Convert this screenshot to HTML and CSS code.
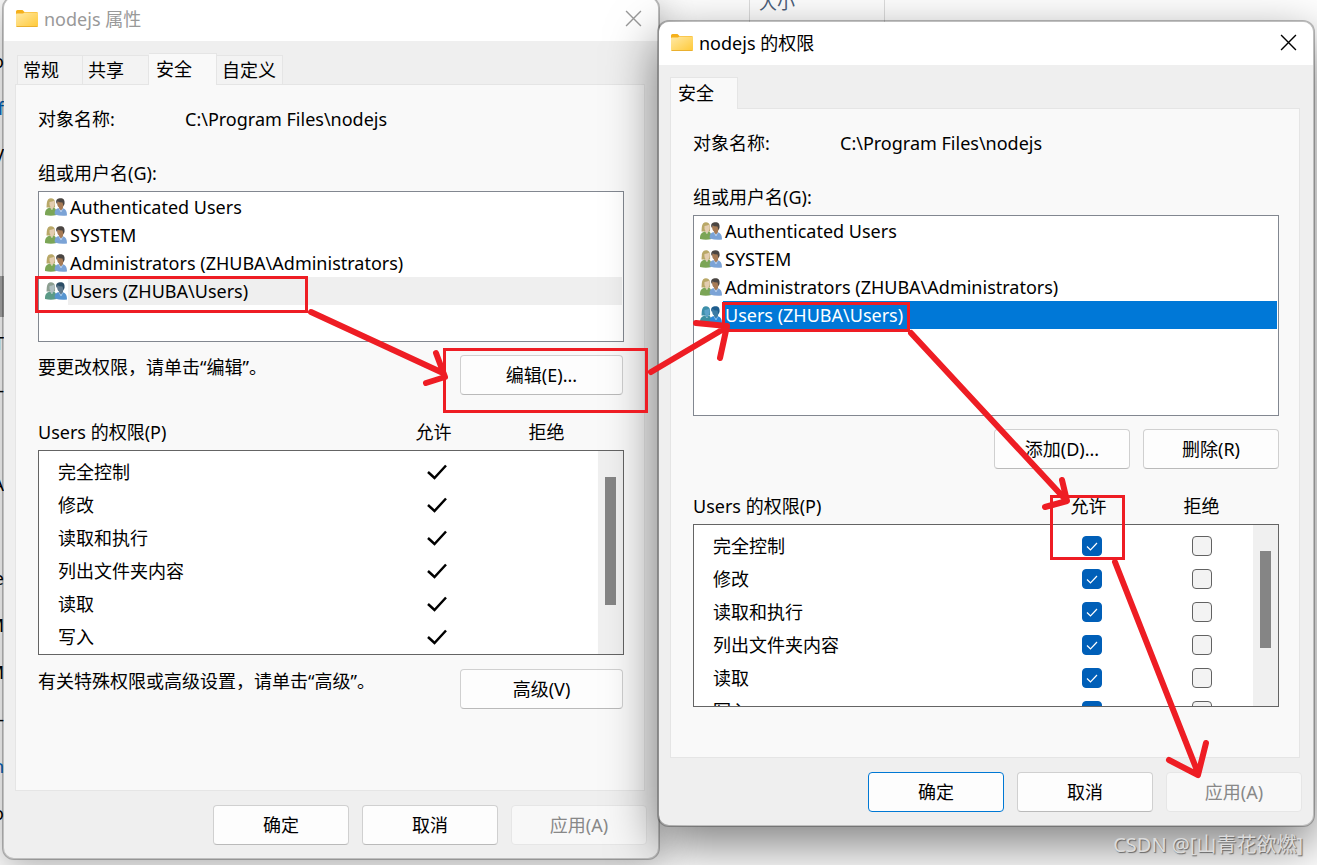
FILE: index.html
```html
<!DOCTYPE html>
<html lang="zh-CN">
<head>
  <meta charset="UTF-8" />
  <meta name="viewport" content="width=device-width, initial-scale=1.0"/>
  <title>nodejs 的权限</title>
  <link rel="stylesheet" href="styles.css">
</head>
<body>
  <!-- Shared icons -->
  <svg class="sprite" aria-hidden="true">
    <defs>
      <linearGradient id="folderFill" x1="0" y1="0" x2="1" y2="1">
        <stop offset="0" stop-color="#ffe9a6"/>
        <stop offset="1" stop-color="#ffc937"/>
      </linearGradient>
    </defs>
    <symbol id="folder" viewBox="0 0 22 17">
      <path d="M0 1.5Q0 0 1.5 0H6.500L8.500 2H20.500Q22 2 22 3.500V9H0Z" fill="#f5b01a"/>
      <path d="M0 4.500Q0 3.500 1 3.500H7L8.500 2.500H21Q22 2.500 22 3.500V15.500Q22 17 20.500 17H1.500Q0 17 0 15.500Z" fill="url(#folderFill)"/>
      <path d="M.5 16.500H21.500" stroke="#eab02f"/>
    </symbol>
    <symbol id="users" viewBox="0 0 22 18">
      <path class="hair-a" d="M1.500 9.500C2 6 1 .5 6 .2C10 .2 10.500 4 10 9.500Z"/>
      <path class="face-a" d="M4.500 4Q7 3.500 9.500 2.500Q10.500 8 8 9.500V11H5.500V9Q4 7 4.500 4Z"/>
      <path class="body-a" d="M0 17C0 12.500 1 10.500 5 9.500L7 12L8.500 9.500C10.500 10 11.500 12 11.500 17Q6 18.500 0 17Z"/>
      <path class="face-b" d="M12 3.500Q12 8.500 14 9.500V12H18V9Q19.500 7 19 3.500Z"/>
      <path class="hair-b" d="M11.200 4.500C10.800 1.500 13 .3 15.500 .3C18.500 .3 20 2 19.500 6L18.500 8L17.500 4.500Q14 4.500 12.500 3.500L12 6Z"/>
      <path class="body-b" d="M9.800 16.500C9.300 12.500 10.500 11 13.500 10L16 12.500L18 10.300C21 11.500 22 13.500 22 17.500Q16 18.500 9.800 16.500Z"/>
      <path d="M14 10.300L16 14L17.800 10.500" fill="none" stroke="#fff" stroke-opacity=".5" stroke-width=".8"/>
    </symbol>
    <symbol id="close" viewBox="0 0 16 16">
      <path d="M1 1L15 15M15 1L1 15" fill="none" stroke="currentColor" stroke-width="1.300"/>
    </symbol>
    <symbol id="tick" viewBox="0 0 20 16">
      <path d="M1 8L7.500 14L19 1.500" fill="none" stroke="#000" stroke-width="2.500"/>
    </symbol>
  </svg>

  <div class="desktop">
    <!-- Explorer behind the dialogs -->
    <div class="explorer-names" aria-hidden="true">
      <span>o</span><span class="blue">f</span><span>V</span><span></span><span></span><span class="thumb"></span>
      <span>T</span><span>-</span><span></span><span>A</span><span></span><span>e</span><span>M</span><span>M</span>
      <span>-</span><span class="blue">h</span><span>o</span>
    </div>
    <div class="explorer-column" aria-hidden="true">大小</div>

    <!-- Properties dialog -->
    <section class="window inactive">
      <header class="titlebar">
        <svg class="folder"><use href="#folder"/></svg>
        <h1>nodejs 属性</h1>
        <button class="close" type="button" aria-label="关闭"><svg><use href="#close"/></svg></button>
      </header>
      <div class="window-body">
        <div class="tabs several" role="tablist">
          <button class="tab" type="button" role="tab">常规</button>
          <button class="tab" type="button" role="tab">共享</button>
          <button class="tab active" type="button" role="tab" aria-selected="true">安全</button>
          <button class="tab" type="button" role="tab">自定义</button>
        </div>
        <div class="panel">
          <div class="object">
            <span>对象名称:</span>
            <span>C:\Program Files\nodejs</span>
          </div>
          <div class="label" id="groupsA">组或用户名(G):</div>
          <ul class="user-list" role="listbox" aria-labelledby="groupsA">
            <li role="option"><svg><use href="#users"/></svg><span>Authenticated Users</span></li>
            <li role="option"><svg><use href="#users"/></svg><span>SYSTEM</span></li>
            <li role="option"><svg><use href="#users"/></svg><span>Administrators (ZHUBA\Administrators)</span></li>
            <li class="selected" role="option" aria-selected="true"><svg><use href="#users"/></svg><span>Users (ZHUBA\Users)</span></li>
          </ul>
          <div class="action-row">
            <p>要更改权限，请单击“编辑”。</p>
            <button class="btn wide" type="button">编辑(E)...</button>
          </div>
          <div class="permissions">
            <table>
              <thead>
                <tr><th>Users 的权限(P)</th><th>允许</th><th>拒绝</th></tr>
              </thead>
              <tbody>
                <tr><td>完全控制</td><td><svg class="tick"><use href="#tick"/></svg></td><td></td></tr>
                <tr><td>修改</td><td><svg class="tick"><use href="#tick"/></svg></td><td></td></tr>
                <tr><td>读取和执行</td><td><svg class="tick"><use href="#tick"/></svg></td><td></td></tr>
                <tr><td>列出文件夹内容</td><td><svg class="tick"><use href="#tick"/></svg></td><td></td></tr>
                <tr><td>读取</td><td><svg class="tick"><use href="#tick"/></svg></td><td></td></tr>
                <tr><td>写入</td><td><svg class="tick"><use href="#tick"/></svg></td><td></td></tr>
              </tbody>
            </table>
            <div class="scrollbar"><div class="scroll-thumb"></div></div>
          </div>
          <div class="action-row advanced">
            <p>有关特殊权限或高级设置，请单击“高级”。</p>
            <button class="btn wide" type="button">高级(V)</button>
          </div>
        </div>
        <div class="dialog-buttons">
          <button class="btn" type="button">确定</button>
          <button class="btn" type="button">取消</button>
          <button class="btn" type="button" disabled>应用(A)</button>
        </div>
      </div>
    </section>

    <!-- Permissions dialog -->
    <section class="window front">
      <header class="titlebar">
        <svg class="folder"><use href="#folder"/></svg>
        <h1>nodejs 的权限</h1>
        <button class="close" type="button" aria-label="关闭"><svg><use href="#close"/></svg></button>
      </header>
      <div class="window-body">
        <div class="tabs" role="tablist">
          <button class="tab active" type="button" role="tab" aria-selected="true">安全</button>
        </div>
        <div class="panel">
          <div class="object">
            <span>对象名称:</span>
            <span>C:\Program Files\nodejs</span>
          </div>
          <div class="label" id="groupsB">组或用户名(G):</div>
          <ul class="user-list" role="listbox" aria-labelledby="groupsB">
            <li role="option"><svg><use href="#users"/></svg><span>Authenticated Users</span></li>
            <li role="option"><svg><use href="#users"/></svg><span>SYSTEM</span></li>
            <li role="option"><svg><use href="#users"/></svg><span>Administrators (ZHUBA\Administrators)</span></li>
            <li class="selected" role="option" aria-selected="true"><svg><use href="#users"/></svg><span>Users (ZHUBA\Users)</span></li>
          </ul>
          <div class="list-buttons">
            <button class="btn" type="button">添加(D)...</button>
            <button class="btn" type="button">删除(R)</button>
          </div>
          <div class="permissions">
            <table>
              <thead>
                <tr><th>Users 的权限(P)</th><th>允许</th><th>拒绝</th></tr>
              </thead>
              <tbody>
                <tr><td>完全控制</td><td><input type="checkbox" aria-label="允许完全控制" checked></td><td><input type="checkbox" aria-label="拒绝完全控制"></td></tr>
                <tr><td>修改</td><td><input type="checkbox" aria-label="允许修改" checked></td><td><input type="checkbox" aria-label="拒绝修改"></td></tr>
                <tr><td>读取和执行</td><td><input type="checkbox" aria-label="允许读取和执行" checked></td><td><input type="checkbox" aria-label="拒绝读取和执行"></td></tr>
                <tr><td>列出文件夹内容</td><td><input type="checkbox" aria-label="允许列出文件夹内容" checked></td><td><input type="checkbox" aria-label="拒绝列出文件夹内容"></td></tr>
                <tr><td>读取</td><td><input type="checkbox" aria-label="允许读取" checked></td><td><input type="checkbox" aria-label="拒绝读取"></td></tr>
                <tr><td>写入</td><td><input type="checkbox" aria-label="允许写入" checked></td><td><input type="checkbox" aria-label="拒绝写入"></td></tr>
              </tbody>
            </table>
            <div class="scrollbar"><div class="scroll-thumb"></div></div>
          </div>
        </div>
        <div class="dialog-buttons">
          <button class="btn default" type="button">确定</button>
          <button class="btn" type="button">取消</button>
          <button class="btn" type="button" disabled>应用(A)</button>
        </div>
      </div>
    </section>

    <!-- Red step marks -->
    <svg class="marks" viewBox="0 0 1317 865" preserveAspectRatio="none" aria-hidden="true">
      <g class="boxes">
        <rect x="36.500" y="277.500" width="270" height="34"/>
        <rect x="444.500" y="349.500" width="202" height="62"/>
        <rect x="723.500" y="303.500" width="185" height="27"/>
        <rect x="1051.500" y="496.500" width="72" height="62"/>
      </g>
      <g class="arrows">
        <path d="M311 312L443 373M436 353L445 377L426 383"/>
        <path d="M651 372L727 327M696 323L727 326L720 358"/>
        <path d="M911 333L1065 499M1062 480L1067 501L1045 507"/>
        <path d="M1115 562L1198 773M1169 760L1198 775L1206 743"/>
      </g>
    </svg>

    <div class="watermark">CSDN @[山青花欲燃]</div>
  </div>
</body>
</html>
```

FILE: styles.css
```css
*, *::before, *::after {
  box-sizing: border-box;
}
body {
  margin: 0;
  font-family: "Noto Sans", "Noto Sans CJK SC", sans-serif;
  font-size: 18px;
  line-height: 24px;
  color: #000;
  background: #fff;
}
h1, p, ul {
  margin: 0;
  padding: 0;
}
button {
  font: inherit;
  color: inherit;
  padding: 0;
}
.sprite {
  position: absolute;
  width: 0;
  height: 0;
}

.desktop {
  position: relative;
  display: flex;
  align-items: flex-start;
  min-height: 100vh;
  padding: 0 2px;
  overflow: hidden;
}

/* Explorer behind */
.explorer-names {
  position: absolute;
  top: 38px;
  left: 0;
  width: 4px;
  display: flex;
  flex-direction: column;
  align-items: flex-end;
  overflow: hidden;
}
.explorer-names span {
  height: 47px;
  line-height: 47px;
}
.explorer-names .blue {
  color: #0067c0;
}
.explorer-names .thumb {
  width: 4px;
  height: 41px;
  margin: 3px 0;
  background: #aaa;
}
.explorer-column {
  position: absolute;
  top: -10px;
  right: 432px;
  width: 136px;
  height: 40px;
  padding-left: 9px;
  color: #4c607a;
  border-left: 1px solid #ddd;
  border-right: 1px solid #ddd;
}

/* Windows */
.window {
  position: relative;
  flex: 1;
  min-width: 0;
  border: 2px solid rgba(0, 0, 0, 0.25);
  border-radius: 12px;
  background: #efefef;
  background-clip: padding-box;
  box-shadow: 0 8px 36px rgba(0, 0, 0, 0.32);
}
.window.inactive {
  margin-top: -4px;
}
.window.front {
  margin-top: 20px;
  margin-left: -3px;
  box-shadow: 0 18px 50px rgba(0, 0, 0, 0.5);
}
.titlebar {
  display: flex;
  align-items: center;
  height: 43px;
  padding: 0 16px 2px 12px;
  background: #fff;
  border-radius: 10px 10px 0 0;
}
.titlebar h1 {
  flex: 1;
  font-size: 18px;
  font-weight: 400;
}
.inactive .titlebar {
  color: #999;
}
.folder {
  width: 22px;
  height: 17px;
  margin-right: 6px;
}
.close {
  display: flex;
  border: none;
  background: none;
}
.close svg {
  width: 17px;
  height: 17px;
}
.window-body {
  padding: 12px 11px 13px;
}

/* Tabs */
.tabs {
  display: flex;
  align-items: flex-end;
  height: 31px;
}
.tabs.several {
  padding-left: 2px;
}
.tab {
  min-width: 66px;
  height: 29px;
  padding: 0 4px 0 5px;
  text-align: left;
  background: #f3f3f3;
  border: 1px solid #e5e5e5;
  border-bottom: none;
}
.tab + .tab {
  border-left: none;
}
.tab.active {
  position: relative;
  min-width: 68px;
  height: 32px;
  margin-bottom: -1px;
  padding: 0 7px 2px;
  background: #f9f9f9;
}
.panel {
  margin-right: 2px;
  padding: 22px 20px 50px 22px;
  background: #f9f9f9;
  border: 1px solid #e5e5e5;
}
.inactive .panel {
  padding-bottom: 81px;
}
.object {
  display: grid;
  grid-template-columns: 147px 1fr;
  margin-bottom: 30px;
}
.label {
  margin-bottom: 6px;
}

/* User list */
.user-list {
  height: 201px;
  padding: 1px;
  list-style: none;
  background: #fff;
  border: 1px solid #828790;
}
.inactive .user-list {
  height: 151px;
}
.user-list li {
  display: flex;
  align-items: center;
  height: 28px;
  padding-left: 5px;
}
.user-list svg {
  width: 22px;
  height: 18px;
  margin-right: 1px;
}
.user-list span {
  flex: 1;
  padding-left: 2px;
  line-height: 28px;
}
.selected span {
  background: #0078d7;
  color: #fff;
}
.inactive .selected span {
  background: #efefef;
  color: #000;
}
.user-list li {
  --hair-a: #b9a868;
  --face-a: #e3cdb0;
  --body-a: #7ba556;
  --hair-b: #4a4542;
  --face-b: #a77b55;
  --body-b: #7ba3d6;
}
.user-list .selected {
  --hair-a: #3d8fa9;
  --face-a: #5ba3c9;
  --body-a: #3b8fa0;
  --hair-b: #1d5c8d;
  --face-b: #3c7ba5;
  --body-b: #2c86d8;
}
.inactive .user-list .selected {
  --hair-a: #8d9f91;
  --face-a: #b0bfc2;
  --body-a: #5b9a87;
  --hair-b: #2c4d66;
  --face-b: #61798c;
  --body-b: #5795d0;
}
.hair-a { fill: var(--hair-a); }
.face-a { fill: var(--face-a); }
.body-a { fill: var(--body-a); }
.hair-b { fill: var(--hair-b); }
.face-b { fill: var(--face-b); }
.body-b { fill: var(--body-b); }

/* Buttons */
.btn {
  width: 136px;
  height: 40px;
  background: #fdfdfd;
  border: 1px solid #d0d0d0;
  border-bottom-color: #bababa;
  border-radius: 4px;
}
.btn.wide {
  width: 163px;
}
.btn.default {
  border-color: #0078d4;
}
.btn:disabled {
  color: #888;
  background: #f8f8f8;
  border-color: #e6e6e6;
}
.action-row {
  display: flex;
  justify-content: space-between;
  align-items: flex-start;
  margin: 13px 1px 25px 0;
}
.action-row.advanced {
  margin: 14px 1px 0 0;
}
.list-buttons {
  display: flex;
  justify-content: flex-end;
  gap: 13px;
  margin: 13px 0 25px;
}
.dialog-buttons {
  display: flex;
  justify-content: flex-end;
  gap: 13px;
  margin-top: 14px;
}

/* Permissions table */
.permissions {
  position: relative;
}
.permissions table,
.permissions thead,
.permissions tbody {
  display: block;
}
.permissions tr {
  display: grid;
  grid-template-columns: 1fr 110px 110px 21px;
  align-items: center;
  height: 33px;
}
.permissions thead tr {
  grid-template-columns: 1fr 113px 113px 21px;
  height: 24px;
  margin-bottom: 6px;
}
.permissions th,
.permissions td {
  padding: 0;
  font-weight: 400;
  text-align: center;
}
.permissions th:first-child,
.permissions td:first-child {
  text-align: left;
}
.permissions td:first-child {
  padding-left: 19px;
}
.permissions td {
  display: flex;
  justify-content: center;
}
.permissions td:first-child {
  justify-content: flex-start;
}
.permissions tbody {
  height: 183px;
  padding-top: 4px;
  overflow: hidden;
  background: #fff;
  border: 1px solid #646464;
}
.inactive .permissions tbody {
  height: 205px;
}
.tick {
  width: 20px;
  height: 16px;
}
.permissions input {
  appearance: none;
  width: 20px;
  height: 20px;
  margin: 0;
  background: #f3f3f3;
  border: 1px solid #626262;
  border-radius: 4px;
}
.permissions input:checked {
  border-color: #005fb8;
  background: #005fb8 url("data:image/svg+xml,%3Csvg xmlns='http://www.w3.org/2000/svg' viewBox='0 0 18 18'%3E%3Cpath d='M4 9.500L7.500 13L14 6' fill='none' stroke='white' stroke-width='1.200'/%3E%3C/svg%3E");
}
.scrollbar {
  position: absolute;
  top: 31px;
  right: 1px;
  bottom: 1px;
  width: 25px;
  padding: 26px 7px 0;
  background: #f0f0f0;
}
.scroll-thumb {
  width: 11px;
  height: 97px;
  background: #858585;
}
.inactive .scroll-thumb {
  height: 128px;
}

/* Marks over both windows */
.marks {
  position: absolute;
  top: 0;
  left: 0;
  width: 100%;
  height: 865px;
  pointer-events: none;
}
.boxes {
  fill: none;
  stroke: #ee1d24;
  stroke-width: 3;
}
.arrows {
  fill: none;
  stroke: #ee1d24;
  stroke-width: 6;
  stroke-linecap: round;
  stroke-linejoin: round;
}
.watermark {
  position: absolute;
  right: 14px;
  bottom: 8px;
  font-size: 20px;
  color: #dcdcdc;
  text-shadow: 1px 1px 1px #666;
}
```
